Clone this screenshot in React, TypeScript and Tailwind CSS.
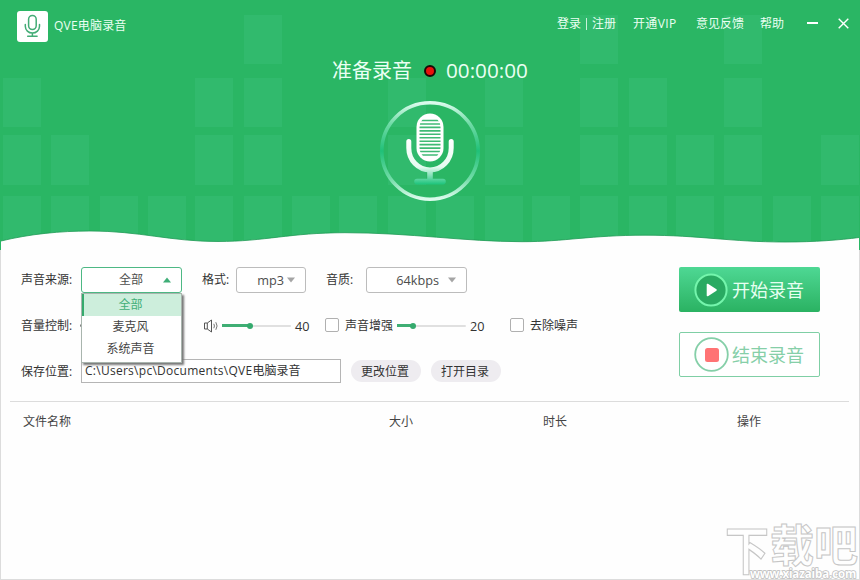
import { ReactNode, useState } from 'react';

// Left edges of the equalizer blocks, one list per row
const BLOCKS = [
  { y: 15, h: 49, xs: [244, 580, 724] },
  { y: 78, h: 49, xs: [3, 195, 244, 388, 485, 580, 629, 724] },
  { y: 135, h: 50, xs: [3, 51, 195, 244, 388, 485, 580, 629, 676, 724, 821] },
  { y: 196, h: 54, xs: [3, 51, 100, 148, 195, 244, 292, 339, 388, 436, 485, 532, 580, 629, 676, 724, 773, 821] },
];

const WAVE =
  'M1 241 C30 234 60 231 90 231 C140 231 170 241.5 218 241.5 C265 241.5 290 232.7 345 232.7 C410 232.7 465 241.7 522 241.7 C565 241.7 590 235.2 645 235.2 C700 235.2 730 242 785 242 C815 242 840 240 859 237.5';

const SOURCES = ['全部', '麦克风', '系统声音'];

function HeaderBackground() {
  return (
    <svg className="absolute inset-0" width="860" height="250" viewBox="0 0 860 250">
      <rect width="860" height="250" fill="#2ab664" />
      {BLOCKS.map((row) =>
        row.xs.map((x) => <rect key={`${row.y}-${x}`} x={x} y={row.y} width="38" height={row.h} fill="#31ba6d" />)
      )}
      <path d={`${WAVE} V250 H1 Z`} fill="#fefefe" />
      <path d={WAVE} fill="none" stroke="#1f9a55" strokeWidth="0.8" />
    </svg>
  );
}

function LogoMic() {
  return (
    <svg width="31" height="31" viewBox="0 0 31 31" fill="none" stroke="#43ac76" strokeWidth="1.5" strokeLinecap="round">
      <rect x="11.6" y="4.5" width="7.6" height="14" rx="3.8" />
      <path d="M8.3 13.5v1.8a7.1 6.8 0 0 0 14.2 0v-1.8M15.4 22.2v3M10.7 25.2h9.4" />
    </svg>
  );
}

function BigMic() {
  return (
    <svg width="100" height="100" viewBox="0 0 100 100" fill="none">
      <defs>
        <linearGradient id="ring" x1="0" y1="0" x2="0" y2="1">
          <stop offset="0" stopColor="#dcfbed" />
          <stop offset="0.22" stopColor="#6fdba6" />
          <stop offset="0.5" stopColor="#20c078" />
          <stop offset="0.78" stopColor="#6fdba6" />
          <stop offset="1" stopColor="#dcfbed" />
        </linearGradient>
        <linearGradient id="stand" gradientUnits="userSpaceOnUse" x1="0" y1="38" x2="0" y2="83">
          <stop offset="0" stopColor="#ffffff" />
          <stop offset="0.62" stopColor="#e6fbf0" />
          <stop offset="1" stopColor="#20c57e" />
        </linearGradient>
        <clipPath id="grille">
          <rect x="39.5" y="15.5" width="21" height="42" rx="10.5" />
        </clipPath>
      </defs>
      <circle cx="50" cy="50" r="48.2" stroke="url(#ring)" strokeWidth="3.6" />
      <rect x="36.5" y="12.5" width="27" height="48" rx="13.5" fill="#fff" />
      <g clipPath="url(#grille)" stroke="#3fba75" strokeWidth="1.6">
        {Array.from({ length: 11 }, (_, i) => (
          <path key={i} d={`M39 ${19.5 + i * 3.45}h22`} />
        ))}
      </g>
      <path d="M28.8 40.5v6.5a21.2 22 0 0 0 42.4 0v-6.5" stroke="url(#stand)" strokeWidth="5" strokeLinecap="round" />
      <path d="M47.2 71h5.6v6.8h10.2a2.8 2.8 0 0 1 0 5.6h-26a2.8 2.8 0 0 1 0-5.6h10.2z" fill="url(#stand)" />
    </svg>
  );
}

function Select({ value, open, className, onClick }: { value: string; open?: boolean; className: string; onClick?: () => void }) {
  return (
    <button
      onClick={onClick}
      className={`flex h-[26px] items-center justify-end rounded-[3px] border bg-white ${open ? 'border-[#4db884]' : 'border-[#bcbcbc]'} ${className}`}
    >
      <span className="text-[#4d4d4d]">{value}</span>
      <svg width="8" height="6" viewBox="0 0 8 6" fill={open ? '#3fae77' : '#a5a5a5'}>
        <path d={open ? 'M0 5.5h8L4 .5z' : 'M0 .5h8l-4 5z'} />
      </svg>
    </button>
  );
}

function Slider({ percent }: { percent: number }) {
  return (
    <div className="relative flex h-[6px] w-[69px] items-center">
      <div className="h-[2px] w-full rounded-full bg-[#e0e0e0]" />
      <div className="absolute left-0 h-[3px] bg-[#3fae74]" style={{ width: `${percent}%` }} />
      <div className="absolute size-[6px] -translate-x-1/2 rounded-full bg-[#35aa6d]" style={{ left: `${percent}%` }} />
    </div>
  );
}

function Checkbox({ label }: { label: string }) {
  return (
    <label className="flex items-center gap-[6px]">
      <span className="-mt-px size-[14px] rounded-[2px] border border-[#b0b0b0] bg-white" />
      {label}
    </label>
  );
}

function Label({ children }: { children: ReactNode }) {
  return <span className="w-[60px] shrink-0">{children}</span>;
}

function Watermark() {
  return (
    <div className="absolute top-[522px] left-[725px] h-[58px] w-[135px] font-bold text-[#fefefe]">
      <div className="flex text-[44px] leading-[46px] [-webkit-text-stroke:1px_#c6c6c6]">
        <span className="w-[45px] origin-top scale-y-[1.2]">下</span>
        <span className="w-[44px]">载</span>
        <span className="w-[44px]">吧</span>
      </div>
      <span className="absolute top-[46px] left-[25px] text-[11.5px] leading-[12px] tracking-[-0.1px] [-webkit-text-stroke:1.5px_#bdbdbd] [paint-order:stroke_fill]">
        www.xiazaiba.com
      </span>
    </div>
  );
}

export default function App() {
  const [source, setSource] = useState('全部');
  const [open, setOpen] = useState(true);

  return (
    <div className="relative h-[580px] w-[860px] overflow-hidden bg-[#fefefe] font-['Open_Sans','Noto_Sans_CJK_SC',sans-serif] text-[12px] leading-[18px] whitespace-nowrap text-[#333]">
      <div className="flex h-full flex-col border-x border-b border-[#dcdcdc]">
        {/* Header */}
        <header className="relative -mx-px h-[250px] shrink-0 text-[#eafff3]">
          <HeaderBackground />
          <div className="relative flex items-start">
            <div className="mt-[11px] ml-[17px] size-[31px] rounded-[3px] bg-white">
              <LogoMic />
            </div>
            <h1 className="mt-[17px] ml-[6px] tracking-[0.2px]">QVE电脑录音</h1>
            <nav className="mt-[15px] mr-[11px] ml-auto flex items-center">
              <a>登录</a>
              <span className="mx-[5px] h-[12px] w-px bg-[#c9f2da]" />
              <a>注册</a>
              <a className="ml-[17px] w-[46px] tracking-[0.4px]">开通VIP</a>
              <a className="ml-[17px]">意见反馈</a>
              <a className="ml-[16px]">帮助</a>
              <span className="ml-[23px] h-[2px] w-[11px] -translate-y-px bg-white" />
              <svg className="mb-[2px] ml-[20px]" width="11" height="11" viewBox="0 0 11 11" stroke="#fff" strokeWidth="1.4">
                <path d="M.7.7l9.6 9.6M10.3.7L.7 10.3" />
              </svg>
            </nav>
          </div>
          <div className="relative mt-[13px] flex h-[30px] items-center pl-[332px] text-[20px] leading-[30px]">
            <span className="w-[92px] pt-px">准备录音</span>
            <span className="mt-[2px] size-[12px] rounded-full border-[2.5px] border-[#1c0805] bg-[#e8120c]" />
            <span className="-mt-px ml-[10px] text-[20.7px]">00:00:00</span>
          </div>
          <div className="relative mt-[16px] flex justify-center">
            <BigMic />
          </div>
        </header>

        {/* Settings and record buttons */}
        <main className="flex justify-between pt-[17px] pr-[39px] pl-[20px]">
          <div>
            <div className="flex h-[26px] items-center">
              <Label>声音来源:</Label>
              <div className="relative">
                <Select value={source} open={open} onClick={() => setOpen(!open)} className="w-[101px] gap-[20px] pr-[10px]" />
                {open && (
                  <ul className="absolute top-[26px] left-0 z-10 h-[70px] w-[101px] border border-[#a9b5ae] bg-white text-center leading-[22px] shadow-[2px_2px_2px_#777]">
                    {SOURCES.map((item) => (
                      <li
                        key={item}
                        onClick={() => {
                          setSource(item);
                          setOpen(false);
                        }}
                        className={
                          item === source
                            ? 'border-l-2 border-[#35aa6d] bg-[#cdeedc] pr-[4px] text-[#43ae78]'
                            : 'pr-[2px] text-[#444]'
                        }
                      >
                        {item}
                      </li>
                    ))}
                  </ul>
                )}
              </div>
              <span className="ml-[20px] w-[34px]">格式:</span>
              <Select value="mp3" className="w-[70px] gap-[3px] pr-[10px] text-[12.7px]" />
              <span className="ml-[20px] w-[40px]">音质:</span>
              <Select value="64kbps" className="w-[101px] gap-[9px] pr-[10px] text-[12.7px]" />
            </div>

            <div className="mt-[20px] flex h-[25px] items-center">
              <Label>音量控制:</Label>
              <span className="-ml-px size-[3px] rounded-full bg-[#777]" />
              <svg className="ml-[121px]" width="15" height="14" viewBox="0 0 15 14" fill="none" stroke="#555" strokeWidth="1">
                <path d="M.5 4h2.8l4.2-3v12l-4.2-3H.5zM3.3 4v6" />
                <path d="M9.8 4.8q1.3 2.2 0 4.4M11.8 3.2q2.6 3.8 0 7.6" stroke="#777" />
              </svg>
              <div className="ml-[3px] flex w-[103px] items-center gap-[4px]">
                <Slider percent={40} />
                <span className="text-[12.7px]">40</span>
              </div>
              <Checkbox label="声音增强" />
              <div className="ml-[4px] flex w-[113px] items-center gap-[4px]">
                <Slider percent={23} />
                <span className="text-[12.7px]">20</span>
              </div>
              <Checkbox label="去除噪声" />
            </div>

            <div className="mt-[21px] flex h-[24px] items-center">
              <Label>
                <span className="block pt-[2px]">保存位置:</span>
              </Label>
              <div className="h-[24px] w-[260px] border border-[#b5b5b5] bg-white pl-[3px] leading-[22px] text-[#333]">
                <span className="tracking-[0.27px]">C:\Users\pc\Documents\QVE</span>电脑录音
              </div>
              <button className="ml-[10px] h-[22px] w-[70px] rounded-full bg-[#eeecf0] pt-px pr-[2px]">更改位置</button>
              <button className="ml-[10px] h-[22px] w-[70px] rounded-full bg-[#eeecf0] pt-px pr-[2px]">打开目录</button>
            </div>
          </div>

          <div className="flex flex-col gap-[20px] text-[18px]">
            <button className="flex h-[45px] w-[141px] items-center rounded-[2px] bg-linear-to-b from-[#4ed894] to-[#2ab262] pl-[15px] text-[#e6fff1]">
              <svg width="34" height="34" viewBox="0 0 34 34">
                <circle cx="17" cy="17" r="15.6" fill="#29aa62" stroke="#74f5ac" strokeWidth="2" />
                <path d="M13.5 11.5v11l8.5-5.5z" fill="#fff" stroke="#fff" strokeWidth="1.6" strokeLinejoin="round" />
              </svg>
              <span className="ml-[4px] pt-px">开始录音</span>
            </button>
            <button className="flex h-[45px] w-[141px] items-center rounded-[2px] border border-[#7fcfa5] bg-white pl-[14px] text-[#86cfa8]">
              <svg width="35" height="35" viewBox="0 0 35 35">
                <circle cx="17.5" cy="17.5" r="16.3" fill="#fff" stroke="#85cfa8" strokeWidth="1.8" />
                <rect x="11" y="11" width="14" height="14" rx="2.5" fill="#ff7374" />
              </svg>
              <span className="ml-[3px] pt-px">结束录音</span>
            </button>
          </div>
        </main>

        {/* File list */}
        <div className="mt-[18px] ml-[9px] flex w-[839px] border-t border-[#dcdcdc] pt-[11px] pl-[13px] text-[#444]">
          <span className="w-[366px]">文件名称</span>
          <span className="w-[154px]">大小</span>
          <span className="w-[194px]">时长</span>
          <span>操作</span>
        </div>
      </div>
      <Watermark />
    </div>
  );
}
